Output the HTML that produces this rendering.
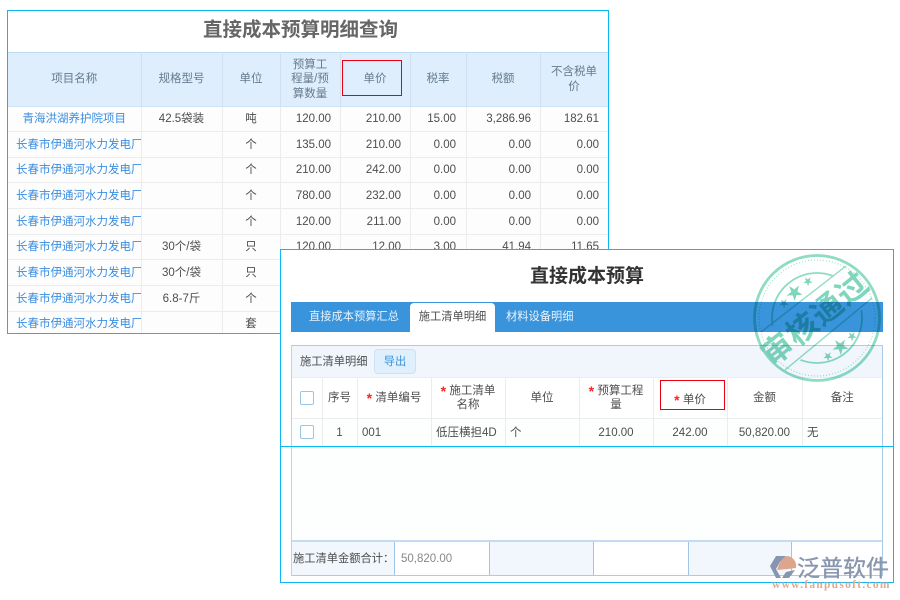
<!DOCTYPE html>
<html lang="zh"><head><meta charset="utf-8"><title>直接成本预算</title>
<style>
html,body{margin:0;padding:0;background:#fff}
body{width:900px;height:600px;position:relative;overflow:hidden;font:11.5px/14px "Liberation Sans","Noto Sans CJK SC",sans-serif;color:#4d4d4d}
.a{position:absolute;box-sizing:border-box}
table{border-collapse:collapse;table-layout:fixed;position:absolute}
td{padding:0;box-sizing:border-box;overflow:hidden;white-space:nowrap}
#top{left:7px;top:10px;width:602px;height:324px;border:1px solid #0cb9f3;background:#fff;overflow:hidden;filter:blur(.25px)}
#top h1{margin:0;position:absolute;left:0;right:15px;top:7px;text-align:center;font-size:19.5px;line-height:24px;font-weight:700;color:#666}
#tt{left:0;top:41px;width:600px}
#tt th{font-weight:400;background:#deeefc;color:#667b8e;border-right:1px solid #cfe0f0;border-top:1px solid #b9dcf3;border-bottom:1px solid #cfe3f5;padding:0 8px;white-space:normal;line-height:14.5px;height:54px;box-sizing:border-box}
#tt td{border-right:1px solid #ececec;border-bottom:1px solid #ececec;text-align:center;background:#fdfdfd;color:#4d4d4d}
#tt td:first-child{color:#3b8ee0}
#tt td.r{text-align:right;padding-right:8.5px}
#tt td.r:nth-child(6){padding-right:9.5px}
#tt td.l{text-align:left;padding-left:8px}
#bot{left:280px;top:249px;width:614px;height:334px;border:1px solid #0cb9f3;background:#fff;overflow:hidden;filter:blur(.25px)}
#bot h2{margin:0;position:absolute;left:0;right:0;top:15px;text-align:center;font-size:19px;line-height:24px;font-weight:700;color:#333}
.tabs{left:10px;top:52px;width:592px;height:30px;background:#3a94dc;color:#e8f3fc;font-size:11.25px;line-height:31px}
.tabs span{position:absolute;top:0}
.tabs .on{left:119px;top:1px;width:85px;height:30px;background:#fff;border-radius:4px 4px 0 0;color:#4d4d4d;text-align:center;line-height:29px}
#grid{left:10px;top:95px;width:592px;height:231px;border:1px solid #a9cde9;border-left-color:#b8d5ee;background:#fdfefe;font-size:11.5px}
.bar{left:0;top:0;width:590px;height:32px;background:#f1f6fd;border-bottom:1px solid #e8eef5;line-height:32px;padding-left:8px;color:#4d4d4d;font-size:11.25px}
.btn{left:82px;top:3px;width:42px;height:25px;background:#e0effc;border:1px solid #cbe1f5;border-radius:4px;color:#3a94dc;text-align:center;line-height:24px;font-size:11.25px}
#gt{left:0;top:32px;width:590px}
#gt td{border-right:1px solid #ececec;border-bottom:1px solid #ececec;text-align:center;color:#4d4d4d;line-height:14px;white-space:normal}
#gt .r1 td{height:40px;background:#fff}
#gt .r2 td{height:29px;background:#fdfefe}
#gt td:last-child{border-right:0}
#gt td.l{text-align:left;padding-left:4.5px}
i{font-style:normal;font-weight:700;color:#f22;font-size:14px;line-height:0;position:relative;top:2px}
.cb{display:inline-block;width:12px;height:12px;border:1px solid #9cc4e4;border-radius:2px;background:#fff;vertical-align:middle;position:relative;left:.5px}
#ft{left:0;top:194px;width:590px;height:35px;border-top:2px solid #c4dcf1}
#ft div{position:absolute;top:0;height:33px;border-right:1px solid #9fc6e8;line-height:34px;color:#4d4d4d;box-sizing:border-box}
.red{border:1px solid #e8000f;z-index:5}
#line{left:281px;top:446px;width:612px;height:1px;background:#0cb9f3;z-index:6}
</style></head><body>

<div class="a" id="top">
<h1>直接成本预算明细查询</h1>
<table id="tt">
<colgroup><col style="width:133px"><col style="width:81px"><col style="width:58px"><col style="width:60px"><col style="width:70px"><col style="width:56px"><col style="width:74px"><col style="width:68px"></colgroup>
<tr><th>项目名称</th><th>规格型号</th><th>单位</th><th>预算工程量/预算数量</th><th>单价</th><th>税率</th><th>税额</th><th>不含税单价</th></tr>
<tr style="height:25px"><td>青海洪湖养护院项目</td><td>42.5袋装</td><td>吨</td><td class="r">120.00</td><td class="r">210.00</td><td class="r">15.00</td><td class="r">3,286.96</td><td class="r">182.61</td></tr>
<tr style="height:26px"><td class="l">长春市伊通河水力发电厂</td><td></td><td>个</td><td class="r">135.00</td><td class="r">210.00</td><td class="r">0.00</td><td class="r">0.00</td><td class="r">0.00</td></tr>
<tr style="height:25px"><td class="l">长春市伊通河水力发电厂</td><td></td><td>个</td><td class="r">210.00</td><td class="r">242.00</td><td class="r">0.00</td><td class="r">0.00</td><td class="r">0.00</td></tr>
<tr style="height:26px"><td class="l">长春市伊通河水力发电厂</td><td></td><td>个</td><td class="r">780.00</td><td class="r">232.00</td><td class="r">0.00</td><td class="r">0.00</td><td class="r">0.00</td></tr>
<tr style="height:26px"><td class="l">长春市伊通河水力发电厂</td><td></td><td>个</td><td class="r">120.00</td><td class="r">211.00</td><td class="r">0.00</td><td class="r">0.00</td><td class="r">0.00</td></tr>
<tr style="height:25px"><td class="l">长春市伊通河水力发电厂</td><td>30个/袋</td><td>只</td><td class="r">120.00</td><td class="r">12.00</td><td class="r">3.00</td><td class="r">41.94</td><td class="r">11.65</td></tr>
<tr style="height:26px"><td class="l">长春市伊通河水力发电厂</td><td>30个/袋</td><td>只</td><td class="r"></td><td class="r"></td><td class="r"></td><td class="r"></td><td class="r"></td></tr>
<tr style="height:26px"><td class="l">长春市伊通河水力发电厂</td><td>6.8-7斤</td><td>个</td><td class="r"></td><td class="r"></td><td class="r"></td><td class="r"></td><td class="r"></td></tr>
<tr style="height:25px"><td class="l">长春市伊通河水力发电厂</td><td></td><td>套</td><td class="r"></td><td class="r"></td><td class="r"></td><td class="r"></td><td class="r"></td></tr>
</table>
</div>
<div class="a red" style="left:342px;top:60px;width:60px;height:36px"></div>

<div class="a" id="bot">
<h2>直接成本预算</h2>
<div class="a tabs"><span style="left:18px">直接成本预算汇总</span><span class="on">施工清单明细</span><span style="left:215px">材料设备明细</span></div>
<div class="a" id="grid">
<div class="a bar">施工清单明细</div>
<div class="a btn">导出</div>
<table id="gt">
<colgroup><col style="width:30px"><col style="width:35px"><col style="width:74px"><col style="width:74px"><col style="width:74px"><col style="width:74px"><col style="width:74px"><col style="width:75px"><col style="width:80px"></colgroup>
<tr class="r1"><td><span class="cb"></span></td><td>序号</td><td><i>*</i> 清单编号</td><td><i>*</i> 施工清单<br>名称</td><td>单位</td><td><i>*</i> 预算工程<br>量</td><td style="padding-top:4px"><i>*</i> 单价</td><td>金额</td><td>备注</td></tr>
<tr class="r2"><td><span class="cb"></span></td><td>1</td><td class="l">001</td><td class="l">低压横担4D</td><td class="l">个</td><td>210.00</td><td>242.00</td><td>50,820.00</td><td class="l">无</td></tr>
</table>
<div class="a" id="ft">
<div style="left:0;width:103px;background:#f1f7fd;padding-left:1px;white-space:nowrap;font-size:11.25px">施工清单金额合计：</div>
<div style="left:103px;width:95px;background:#fff;padding-left:6px;color:#888">50,820.00</div>
<div style="left:198px;width:104px;background:#f1f7fd"></div>
<div style="left:302px;width:95px;background:#fff"></div>
<div style="left:397px;width:103px;background:#f1f7fd"></div>
<div style="left:500px;width:90px;background:#fff;border-right:0"></div>
</div>
</div>
</div>
<div class="a" id="line"></div>
<div class="a red" style="left:660px;top:380px;width:65px;height:30px"></div>

<svg class="a" style="left:0;top:0;z-index:8;mix-blend-mode:multiply" width="900" height="600" viewBox="0 0 900 600">
<defs><mask id="m"><rect width="900" height="600" fill="#fff"/><rect x="737" y="296" width="160" height="44" fill="#000" transform="rotate(-39 817 318)"/></mask></defs>
<g fill="none" stroke="#8ddcc3">
<circle cx="817" cy="318" r="62.5" stroke-width="2.8"/>
<circle cx="817" cy="318" r="58" stroke-width="1" stroke-dasharray="1 2"/>
<circle cx="817" cy="318" r="45" stroke-width="1.8" mask="url(#m)"/>
<line x1="761" y1="332" x2="846" y2="266" stroke-width="1.4"/>
<line x1="785" y1="370" x2="872" y2="298" stroke-width="1.4"/>
</g>
<g fill="#7fd6bc" font-family="'Liberation Sans','Noto Sans CJK SC',sans-serif" text-anchor="middle">
<text font-size="31" font-weight="700" letter-spacing="1" transform="translate(822 327) rotate(-39)">审核通过</text>
<text font-size="17" transform="translate(798 297) rotate(-39)">★</text>
<text font-size="10" transform="translate(810 284) rotate(-39)">★</text>
<text font-size="10" transform="translate(786 306) rotate(-39)">★</text>
<text font-size="17" transform="translate(844 351) rotate(-39)">★</text>
<text font-size="10" transform="translate(830 359) rotate(-39)">★</text>
<text font-size="10" transform="translate(854 339) rotate(-39)">★</text>
</g>
</svg>

<svg class="a" style="left:0;top:0;z-index:9" width="900" height="600" viewBox="0 0 900 600">
<path d="M770 566 L776 556 L786 556 L780 562 L776 569 L781 578 L776 578 Z" fill="#8795ae"/>
<path d="M787 556 A10 10 0 0 1 796 568 L788 569 L777 570 C779 563 782 558 787 556Z" fill="#dea58d"/>
<path d="M782 578 L789 578 L795 570 L786 572 Z" fill="#8795ae"/>
<text x="797" y="576" font-size="23" stroke="#8896ae" stroke-width=".35" fill="#8896ae" font-family="'Liberation Sans','Noto Sans CJK SC',sans-serif">泛普软件</text>
<text x="772" y="588" font-size="11.5" font-weight="700" letter-spacing="1.27" fill="#e3a78f" font-family="'Liberation Serif',serif">www.fanpusoft.com</text>
</svg>
</body></html>
